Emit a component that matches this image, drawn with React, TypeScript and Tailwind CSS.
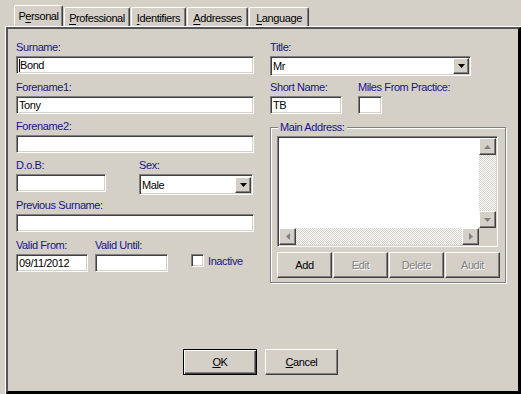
import { FC, ReactNode } from 'react';

const sunken =
  'border border-t-[#808080] border-l-[#808080] border-b-white border-r-white shadow-[inset_1px_1px_0_#404040,inset_-1px_-1px_0_#d4d0c8]';
const raised =
  'border border-t-white border-l-white border-b-[#404040] border-r-[#404040] shadow-[inset_-1px_-1px_0_#808080]';

const Field: FC<{ label: string; className?: string; children: ReactNode }> = ({ label, className, children }) => (
  <div className={className}>
    <div className="h-[14px] leading-[14px] whitespace-nowrap text-[#14148c]">{label}</div>
    <div className="mt-[2px]">{children}</div>
  </div>
);

const TextBox: FC<{ w: string; value?: string; caret?: boolean }> = ({ w, value, caret }) => (
  <div className={`${w} h-[18px] ${sunken} bg-white flex items-center pl-[2px] leading-[14px] text-black`}>
    {caret && <span className="inline-block w-px h-[13px] bg-black" />}
    {value}
  </div>
);

const Arrow: FC<{ dir: 'up' | 'down' | 'left' | 'right'; color?: string }> = ({ dir, color = '#000' }) => {
  const pts = {
    down: '0,0 7,0 3.5,4',
    up: '0,4 7,4 3.5,0',
    left: '4,0 4,7 0,3.5',
    right: '0,0 0,7 4,3.5'
  }[dir];
  const vertical = dir === 'up' || dir === 'down';
  return (
    <svg width={vertical ? 7 : 4} height={vertical ? 4 : 7} viewBox={vertical ? '0 0 7 4' : '0 0 4 7'}>
      <polygon points={pts} fill={color} />
    </svg>
  );
};

const Combo: FC<{ w: string; value: string }> = ({ w, value }) => (
  <div className={`${w} h-[20px] ${sunken} bg-white flex items-center pl-[2px] text-black`}>
    <span className="flex-1 leading-[14px]">{value}</span>
    <div className={`w-[16px] h-[16px] mr-px ${raised} bg-[#d4d0c8] flex items-center justify-center`}>
      <Arrow dir="down" />
    </div>
  </div>
);

const ScrollBtn: FC<{ dir: 'up' | 'down' | 'left' | 'right' }> = ({ dir }) => (
  <div className={`w-[17px] h-[17px] shrink-0 ${raised} bg-[#d4d0c8] flex items-center justify-center`}>
    <Arrow dir={dir} color="#808080" />
  </div>
);

const track =
  'flex-1 bg-[image:repeating-conic-gradient(#ffffff_0_25%,#d4d0c8_0_50%)] bg-[length:2px_2px]';

const Btn: FC<{ w: string; h?: string; disabled?: boolean; isDefault?: boolean; children: ReactNode }> = ({
  w,
  h = 'h-[26px]',
  disabled,
  isDefault,
  children
}) => (
  <button
    className={`${w} ${h} flex items-center justify-center bg-[#d4d0c8] ${
      isDefault
        ? 'border border-black shadow-[inset_1px_1px_0_#fff,inset_-1px_-1px_0_#404040,inset_-2px_-2px_0_#808080]'
        : raised
    } ${disabled ? 'text-[#808080] [text-shadow:1px_1px_0_#fff]' : 'text-black'}`}>
    {children}
  </button>
);

const tabs = [
  { pre: 'P', key: 'e', post: 'rsonal', w: 'w-[49px]' },
  { pre: '', key: 'P', post: 'rofessional', w: 'w-[66px]' },
  { pre: '', key: 'I', post: 'dentifiers', w: 'w-[55px]' },
  { pre: '', key: 'A', post: 'ddresses', w: 'w-[61px]' },
  { pre: '', key: 'L', post: 'anguage', w: 'w-[60px]' }
];

export default function App() {
  return (
    <div className="w-[521px] h-[394px] bg-[#d4d0c8] flex flex-col pl-[5px] font-['Liberation_Sans',Arial,sans-serif] text-[11px] tracking-[-0.4px] text-black overflow-hidden">
      {/* tab strip */}
      <div className="h-[26px] flex items-end pl-[9px] gap-px">
        {tabs.map((t, i) =>
          i === 0 ? (
            <div
              key={i}
              className={`${t.w} h-[21px] pt-[2px] text-center rounded-tl-[2px] rounded-tr-[2px] border-l border-t border-white border-r border-r-[#404040] shadow-[inset_-1px_0_0_#808080]`}>
              {t.pre}
              <span className="underline underline-offset-[2px]">{t.key}</span>
              {t.post}
            </div>
          ) : (
            <div
              key={i}
              className={`${t.w} h-[19px] pt-[2px] text-center rounded-tl-[2px] rounded-tr-[2px] border-l border-t border-white border-r border-r-[#404040] shadow-[inset_-1px_0_0_#808080]`}>
              <span className="underline underline-offset-[2px]">{t.key}</span>
              {t.post}
            </div>
          )
        )}
      </div>

      {/* page */}
      <div className="flex-1 border-l border-t border-white flex">
        <div className="flex-1 flex flex-col border-l-2 border-t-2 border-l-[#555] border-t-[#555] border-r-[3px] border-b-[3px] border-r-black border-b-black">
          <div className="flex pt-[11px] pl-[8px] gap-[16px]">
            {/* left column */}
            <div className="w-[238px] flex flex-col">
              <Field label="Surname:">
                <TextBox w="w-[238px]" value="Bond" caret />
              </Field>
              <Field label="Forename1:" className="mt-[6px]">
                <TextBox w="w-[238px]" value="Tony" />
              </Field>
              <Field label="Forename2:" className="mt-[5px]">
                <TextBox w="w-[238px]" />
              </Field>
              <div className="flex mt-[5px]">
                <Field label="D.o.B:" className="w-[123px]">
                  <TextBox w="w-[90px]" />
                </Field>
                <Field label="Sex:" className="w-[114px]">
                  <div className="h-px" />
                  <div className="-mt-px">
                    <Combo w="w-[114px] !h-[21px]" value="Male" />
                  </div>
                </Field>
              </div>
              <Field label="Previous Surname:" className="mt-[3px]">
                <TextBox w="w-[238px]" />
              </Field>
              <div className="flex mt-[6px]">
                <Field label="Valid From:" className="w-[79px]">
                  <TextBox w="w-[72px]" value="09/11/2012" />
                </Field>
                <Field label="Valid Until:" className="w-[73px]">
                  <TextBox w="w-[73px]" />
                </Field>
                <div className="ml-[23px] mt-[16px] flex items-start gap-[4px]">
                  <div className={`w-[13px] h-[13px] ${sunken} bg-white`} />
                  <span className="text-[#14148c] leading-[14px]">Inactive</span>
                </div>
              </div>
            </div>

            {/* right column */}
            <div className="w-[236px] flex flex-col">
              <Field label="Title:">
                <Combo w="w-[201px]" value="Mr" />
              </Field>
              <div className="flex mt-[4px]">
                <Field label="Short Name:" className="w-[88px]">
                  <TextBox w="w-[72px]" value="TB" />
                </Field>
                <Field label="Miles From Practice:">
                  <TextBox w="w-[24px]" />
                </Field>
              </div>
              <div className="relative mt-[13px] h-[156px] border border-[#808080] shadow-[inset_1px_1px_0_#fff,1px_1px_0_#fff] pt-[8px] pl-[6px]">
                <span className="absolute -top-[8px] left-[7px] px-[2px] bg-[#d4d0c8] text-[#14148c] leading-[14px]">
                  Main Address:
                </span>
                <div
                  className={`w-[221px] h-[111px] ${sunken} bg-white p-px grid grid-cols-[1fr_17px] grid-rows-[1fr_17px]`}>
                  <div className="bg-white" />
                  <div className="flex flex-col">
                    <ScrollBtn dir="up" />
                    <div className={track} />
                    <ScrollBtn dir="down" />
                  </div>
                  <div className="flex">
                    <ScrollBtn dir="left" />
                    <div className={track} />
                    <ScrollBtn dir="right" />
                  </div>
                  <div className="bg-[#d4d0c8]" />
                </div>
                <div className="flex gap-px mt-[5px]">
                  <Btn w="w-[55px]">Add</Btn>
                  <Btn w="w-[55px]" disabled>
                    Edit
                  </Btn>
                  <Btn w="w-[55px]" disabled>
                    Delete
                  </Btn>
                  <Btn w="w-[55px]" disabled>
                    Audit
                  </Btn>
                </div>
              </div>
            </div>
          </div>

          <div className="mt-auto pb-[16px] pl-[175px] flex gap-[8px]">
            <Btn w="w-[74px]" isDefault>
              <span>
                <span className="underline">O</span>K
              </span>
            </Btn>
            <Btn w="w-[73px]">
              <span>
                <span className="underline">C</span>ancel
              </span>
            </Btn>
          </div>
        </div>
      </div>
    </div>
  );
}
